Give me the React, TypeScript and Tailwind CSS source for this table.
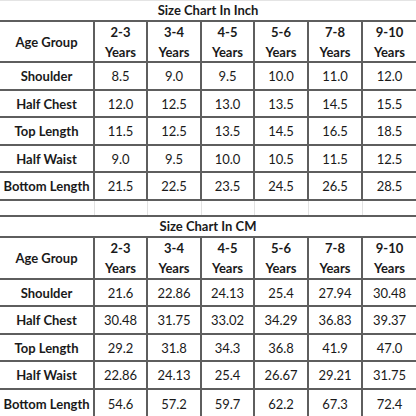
import React from "react";

const cols = ["2-3", "3-4", "4-5", "5-6", "7-8", "9-10"];

const inchRows: [string, string[]][] = [
  ["Shoulder", ["8.5", "9.0", "9.5", "10.0", "11.0", "12.0"]],
  ["Half Chest", ["12.0", "12.5", "13.0", "13.5", "14.5", "15.5"]],
  ["Top Length", ["11.5", "12.5", "13.5", "14.5", "16.5", "18.5"]],
  ["Half Waist", ["9.0", "9.5", "10.0", "10.5", "11.5", "12.5"]],
  ["Bottom Length", ["21.5", "22.5", "23.5", "24.5", "26.5", "28.5"]],
];

const cmRows: [string, string[]][] = [
  ["Shoulder", ["21.6", "22.86", "24.13", "25.4", "27.94", "30.48"]],
  ["Half Chest", ["30.48", "31.75", "33.02", "34.29", "36.83", "39.37"]],
  ["Top Length", ["29.2", "31.8", "34.3", "36.8", "41.9", "47.0"]],
  ["Half Waist", ["22.86", "24.13", "25.4", "26.67", "29.21", "31.75"]],
  ["Bottom Length", ["54.6", "57.2", "59.7", "62.2", "67.3", "72.4"]],
];

const widths = [95, 53, 54, 53, 54, 54, 53];

function Row({
  cells,
  height,
  bottom = true,
  headerFirstBold = true,
  bold = false,
}: {
  cells: React.ReactNode[];
  height: number;
  bottom?: boolean;
  headerFirstBold?: boolean;
  bold?: boolean;
}) {
  return (
    <div
      className={`grid grid-cols-[95px_53px_54px_53px_54px_54px_53px] ${bottom ? "border-b-2 border-[#5e5e5e]" : ""}`}
      style={{ height }}
    >
      {cells.map((c, i) => (
        <div
          key={i}
          className={`flex flex-col items-center justify-center text-center leading-[20px] ${i < 6 ? "border-r-2 border-[#5e5e5e]" : ""} ${(i === 0 && headerFirstBold) || bold ? "font-bold" : "font-normal"}`}
        >
          {c}
        </div>
      ))}
    </div>
  );
}

function Table({
  title,
  rows,
  titleH,
  headH,
  rowHs,
  lastBottom,
}: {
  title: string;
  rows: [string, string[]][];
  titleH: number;
  headH: number;
  rowHs: number[];
  lastBottom: boolean;
}) {
  return (
    <div>
      <div
        className="flex items-center justify-center border-b-2 border-[#5e5e5e] font-bold"
        style={{ height: titleH }}
      >
        {title}
      </div>
      <Row
        height={headH}
        bold
        cells={[
          "Age Group",
          ...cols.map((c) => (
            <>
              <span>{c}</span>
              <span>Years</span>
            </>
          )),
        ]}
      />
      {rows.map(([label, vals], i) => (
        <Row
          key={label}
          height={rowHs[i]}
          bottom={i < rows.length - 1 || lastBottom}
          cells={[label, ...vals]}
        />
      ))}
    </div>
  );
}

export default function App() {
  return (
    <div
      className="w-[416px] h-[416px] overflow-hidden bg-white text-[13px] text-[#1a1a1a] border-t border-[#e4e4e4]"
      style={{ fontFamily: "Lato, 'Open Sans', sans-serif" }}
    >
      <Table
        title="Size Chart In Inch"
        rows={inchRows}
        titleH={21}
        headH={41}
        rowHs={[28, 27, 28, 27, 28]}
        lastBottom
      />
      <div className="grid grid-cols-[95px_53px_54px_53px_54px_54px_53px] h-[16px] border-b-2 border-[#5e5e5e]">
        {widths.map((_, i) => (
          <div key={i} className={i < 6 ? "border-r border-[#e2e2e2]" : ""} />
        ))}
      </div>
      <Table
        title="Size Chart In CM"
        rows={cmRows}
        titleH={21}
        headH={42}
        rowHs={[27, 28, 27, 28, 28]}
        lastBottom={false}
      />
    </div>
  );
}
